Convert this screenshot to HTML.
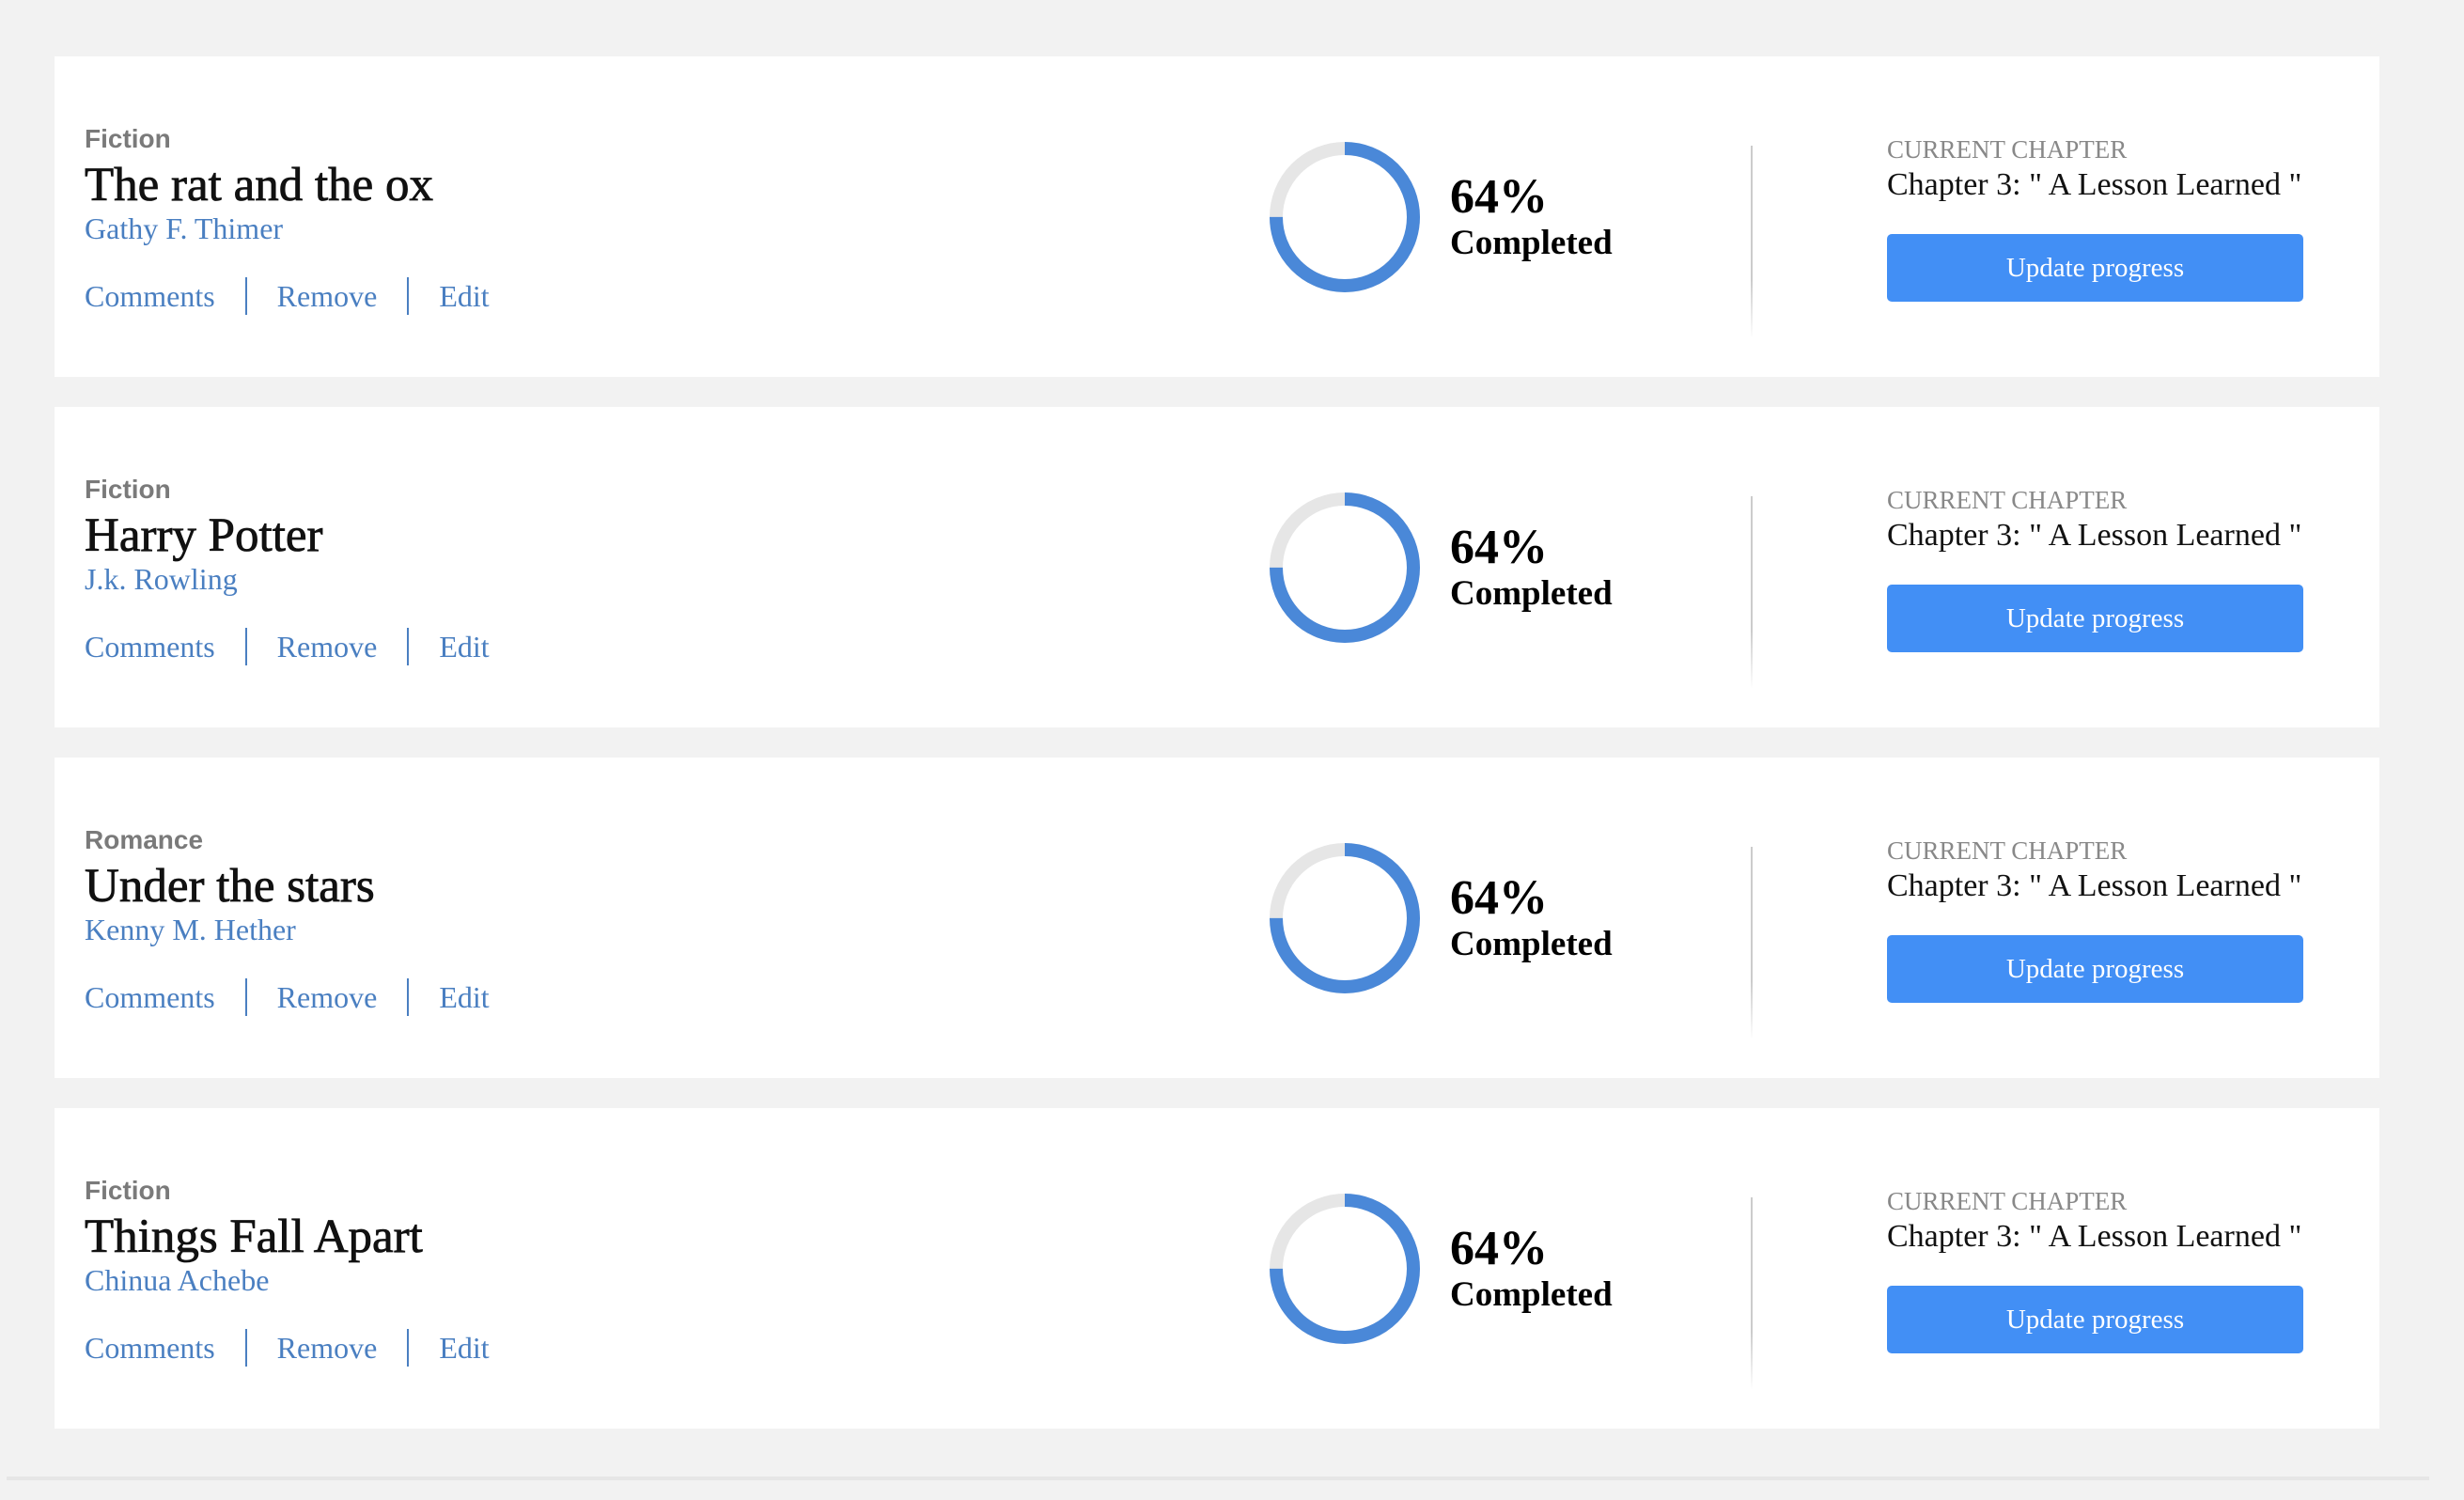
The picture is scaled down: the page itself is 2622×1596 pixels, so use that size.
<!DOCTYPE html>
<html><head><meta charset="utf-8"><style>
body{margin:0;width:2622px;height:1596px;background:#f2f2f2;position:relative;overflow:hidden;font-family:"Liberation Serif",serif}
.card{position:absolute;left:58px;width:2474px;height:341px;background:#fff}
.a{position:absolute;white-space:nowrap;line-height:1}
.genre{left:32px;top:74px;font-family:"Liberation Sans",sans-serif;font-weight:bold;font-size:28px;color:#7a7a7a}
.title{left:32px;top:112px;font-size:51px;color:#111;-webkit-text-stroke:0.8px #111}
.author{left:32px;top:167px;font-size:32px;color:#4a7fc1}
.links{left:32px;top:235px;font-size:32px;color:#4a7fc1}
.links span{display:inline-block;vertical-align:middle}
.sep{width:2px;height:40px;background:#4a7fc1;margin:0 32px}
.ring{left:1293px;top:91px}
.pct{left:1485px;top:124px;font-size:52px;font-weight:bold;color:#000}
.comp{left:1485px;top:180px;font-size:37px;font-weight:bold;color:#000}
.vd{left:1805px;top:95px;width:2px;height:205px;background:linear-gradient(#ccc,#ccc 70%,#fff)}
.cc{left:1950px;top:86px;font-size:27px;color:#888}
.ch{left:1950px;top:120px;font-size:34px;color:#111}
.btn{left:1950px;top:189px;width:443px;height:72px;background:#428ff5;border-radius:5px;color:#fff;font-size:29px;display:flex;align-items:center;justify-content:center}
.line{position:absolute;left:7px;top:1571px;width:2578px;height:4px;background:#e6e6e6}
</style></head><body>

<div class="card" style="top:60px">
<div class="a genre">Fiction</div><div class="a title">The rat and the ox</div><div class="a author">Gathy F. Thimer</div>
<div class="a links"><span>Comments</span><span class="sep"></span><span>Remove</span><span class="sep"></span><span>Edit</span></div>
<svg class="a ring" width="160" height="160"><circle cx="80" cy="80" r="73" fill="none" stroke="#e6e6e6" stroke-width="14"/><circle cx="80" cy="80" r="73" fill="none" stroke="#4a88d8" stroke-width="14" stroke-dasharray="344 500" transform="rotate(-90 80 80)"/></svg>
<div class="a pct">64%</div><div class="a comp">Completed</div><div class="a vd"></div>
<div class="a cc">CURRENT CHAPTER</div><div class="a ch">Chapter 3: " A Lesson Learned "</div><div class="a btn">Update progress</div>
</div>

<div class="card" style="top:433px">
<div class="a genre">Fiction</div><div class="a title">Harry Potter</div><div class="a author">J.k. Rowling</div>
<div class="a links"><span>Comments</span><span class="sep"></span><span>Remove</span><span class="sep"></span><span>Edit</span></div>
<svg class="a ring" width="160" height="160"><circle cx="80" cy="80" r="73" fill="none" stroke="#e6e6e6" stroke-width="14"/><circle cx="80" cy="80" r="73" fill="none" stroke="#4a88d8" stroke-width="14" stroke-dasharray="344 500" transform="rotate(-90 80 80)"/></svg>
<div class="a pct">64%</div><div class="a comp">Completed</div><div class="a vd"></div>
<div class="a cc">CURRENT CHAPTER</div><div class="a ch">Chapter 3: " A Lesson Learned "</div><div class="a btn">Update progress</div>
</div>

<div class="card" style="top:806px">
<div class="a genre">Romance</div><div class="a title">Under the stars</div><div class="a author">Kenny M. Hether</div>
<div class="a links"><span>Comments</span><span class="sep"></span><span>Remove</span><span class="sep"></span><span>Edit</span></div>
<svg class="a ring" width="160" height="160"><circle cx="80" cy="80" r="73" fill="none" stroke="#e6e6e6" stroke-width="14"/><circle cx="80" cy="80" r="73" fill="none" stroke="#4a88d8" stroke-width="14" stroke-dasharray="344 500" transform="rotate(-90 80 80)"/></svg>
<div class="a pct">64%</div><div class="a comp">Completed</div><div class="a vd"></div>
<div class="a cc">CURRENT CHAPTER</div><div class="a ch">Chapter 3: " A Lesson Learned "</div><div class="a btn">Update progress</div>
</div>

<div class="card" style="top:1179px">
<div class="a genre">Fiction</div><div class="a title">Things Fall Apart</div><div class="a author">Chinua Achebe</div>
<div class="a links"><span>Comments</span><span class="sep"></span><span>Remove</span><span class="sep"></span><span>Edit</span></div>
<svg class="a ring" width="160" height="160"><circle cx="80" cy="80" r="73" fill="none" stroke="#e6e6e6" stroke-width="14"/><circle cx="80" cy="80" r="73" fill="none" stroke="#4a88d8" stroke-width="14" stroke-dasharray="344 500" transform="rotate(-90 80 80)"/></svg>
<div class="a pct">64%</div><div class="a comp">Completed</div><div class="a vd"></div>
<div class="a cc">CURRENT CHAPTER</div><div class="a ch">Chapter 3: " A Lesson Learned "</div><div class="a btn">Update progress</div>
</div>

<div class="line"></div>
</body></html>
